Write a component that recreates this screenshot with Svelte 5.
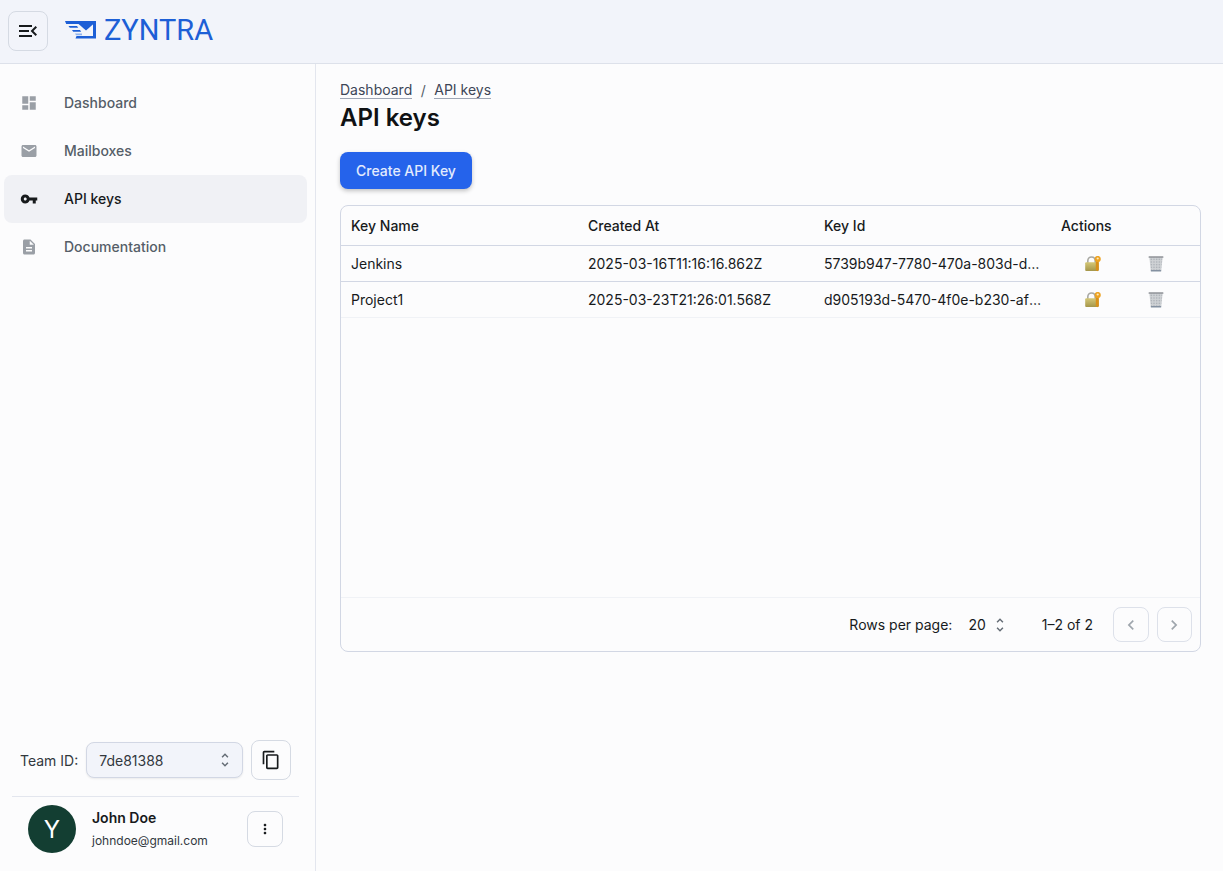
<script lang="ts">
	const navItems = [
		{ label: 'Dashboard', icon: 'M3 13h8V3H3v10zm0 8h8v-6H3v6zm10 0h8V11h-8v10zm0-18v6h8V3h-8z' },
		{
			label: 'Mailboxes',
			icon: 'M20 4H4c-1.1 0-1.99.9-1.99 2L2 18c0 1.1.9 2 2 2h16c1.1 0 2-.9 2-2V6c0-1.1-.9-2-2-2zm0 4l-8 5-8-5V6l8 5 8-5v2z'
		},
		{
			label: 'API keys',
			icon: 'M12.65 10C11.83 7.67 9.61 6 7 6c-3.31 0-6 2.69-6 6s2.69 6 6 6c2.61 0 4.83-1.67 5.65-4H17v4h4v-4h2v-4H12.65zM7 14c-1.1 0-2-.9-2-2s.9-2 2-2 2 .9 2 2-.9 2-2 2z',
			active: true
		},
		{
			label: 'Documentation',
			icon: 'M14 2H6c-1.1 0-1.99.9-1.99 2L4 20c0 1.1.89 2 1.99 2H18c1.1 0 2-.9 2-2V8l-6-6zm2 16H8v-2h8v2zm0-4H8v-2h8v2zm-3-5V3.5L18.5 9H13z'
		}
	];

	const apiKeys = [
		{ name: 'Jenkins', created: '2025-03-16T11:16:16.862Z', id: '5739b947-7780-470a-803d-d2c41f07a9be' },
		{ name: 'Project1', created: '2025-03-23T21:26:01.568Z', id: 'd905193d-5470-4f0e-b230-af71c6e2d810' }
	];

	const unfold =
		'M12 5.83 15.17 9l1.41-1.41L12 3 7.41 7.59 8.83 9 12 5.83zm0 12.34L8.83 15l-1.41 1.41L12 21l4.59-4.59L15.17 15 12 18.17z';
</script>

<div class="page">
	<header class="topbar">
		<button class="icon-btn menu-btn" aria-label="Toggle menu">
			<svg viewBox="0 0 24 24" width="24" height="24"
				><path
					d="M3 18h13v-2H3v2zm0-5h10v-2H3v2zm0-7v2h13V6H3zm18 9.59L17.42 12 21 8.41 19.59 7l-5 5 5 5L21 15.59z"
				/></svg
			>
		</button>
		<div class="brand">
			<svg class="logo" viewBox="0 0 31 18" width="31" height="18">
				<path d="M0 0H31V17.5H10.5L11.5 15H28V3H1.2Z" fill="#1d5fd6" />
				<path d="M13 2.5H29L21 9.5Z" fill="#1d5fd6" />
				<path d="M3.5 5H12L13.2 6.8H4.8Z" fill="#1d5fd6" />
				<path d="M7 9H15L16.2 10.8H8.2Z" fill="#1d5fd6" />
				<path d="M10 12.6H17V14.2H11Z" fill="#8fb2ec" />
			</svg>
			<span class="brand-name">ZYNTRA</span>
		</div>
	</header>

	<div class="body">
		<aside class="sidebar">
			<nav class="nav">
				{#each navItems as item}
					<a href="#top" class="nav-item" class:active={item.active}>
						<svg viewBox="0 0 24 24" width="18" height="18"><path d={item.icon} /></svg>
						<span>{item.label}</span>
					</a>
				{/each}
			</nav>

			<div class="team-row">
				<span class="team-label">Team ID:</span>
				<div class="team-select">
					<span>7de81388</span>
					<svg viewBox="0 0 24 24" width="18" height="18"><path d={unfold} /></svg>
				</div>
				<button class="icon-btn copy-btn" aria-label="Copy team id">
					<svg viewBox="0 0 24 24" width="20" height="20"
						><path
							d="M16 1H4c-1.1 0-2 .9-2 2v14h2V3h12V1zm3 4H8c-1.1 0-2 .9-2 2v14c0 1.1.9 2 2 2h11c1.1 0 2-.9 2-2V7c0-1.1-.9-2-2-2zm0 16H8V7h11v14z"
						/></svg
					>
				</button>
			</div>

			<div class="user-row">
				<div class="avatar">Y</div>
				<div class="user-info">
					<div class="user-name">John Doe</div>
					<div class="user-mail">johndoe@gmail.com</div>
				</div>
				<button class="icon-btn more-btn" aria-label="More">
					<svg viewBox="0 0 24 24" width="16" height="16"
						><path
							d="M12 8c1.1 0 2-.9 2-2s-.9-2-2-2-2 .9-2 2 .9 2 2 2zm0 2c-1.1 0-2 .9-2 2s.9 2 2 2 2-.9 2-2-.9-2-2-2zm0 6c-1.1 0-2 .9-2 2s.9 2 2 2 2-.9 2-2-.9-2-2-2z"
						/></svg
					>
				</button>
			</div>
		</aside>

		<main class="content">
			<div class="crumbs">
				<a href="#top">Dashboard</a>
				<span class="sep">/</span>
				<a href="#top">API keys</a>
			</div>
			<h1>API keys</h1>
			<button class="create-btn">Create API Key</button>

			<div class="table-card">
				<table>
					<thead>
						<tr>
							<th>Key Name</th>
							<th>Created At</th>
							<th>Key Id</th>
							<th>Actions</th>
						</tr>
					</thead>
					<tbody>
						{#each apiKeys as key}
							<tr>
								<td>{key.name}</td>
								<td>{key.created}</td>
								<td class="key-id"><div class="ellipsis">{key.id}</div></td>
								<td class="actions">
									<div class="action-icons">
										<svg viewBox="0 0 16 16" width="16" height="16" aria-label="Rotate key">
											<defs>
												<linearGradient id="lockBody" x1="0" y1="0" x2="0" y2="1">
													<stop offset="0" stop-color="#d5c878" />
													<stop offset="1" stop-color="#a5964a" />
												</linearGradient>
											</defs>
											<path
												d="M2.8 7V5C2.8 2.6 4.4 1 6.5 1S10.2 2.6 10.2 5V7"
												fill="none"
												stroke="#a8a8a2"
												stroke-width="1.6"
											/>
											<rect x="0.2" y="6.2" width="13.6" height="8.8" rx="1" fill="url(#lockBody)" />
											<path d="M10.8 4H13.8V14L12.3 15.2 10.8 14Z" fill="#d9901a" />
											<circle cx="12.7" cy="3" r="3.1" fill="#eda322" />
											<circle cx="12.7" cy="2.5" r="1.1" fill="#fde9c0" />
										</svg>
										<svg viewBox="0 0 16 16" width="16" height="16" aria-label="Delete key">
											<defs>
												<pattern id="mesh" width="1.6" height="1.6" patternUnits="userSpaceOnUse">
													<rect width="1.6" height="1.6" fill="#d0d3d6" />
													<rect width="0.8" height="0.8" fill="#a6abb2" />
												</pattern>
											</defs>
											<path d="M1.4 1.4H14.6L13.2 15H2.8Z" fill="url(#mesh)" />
											<rect x="0.6" y="0.4" width="14.8" height="1.2" rx="0.4" fill="#5a5f67" />
											<rect x="2.8" y="14" width="10.4" height="1.6" rx="0.6" fill="#8491a1" />
										</svg>
									</div>
								</td>
							</tr>
						{/each}
					</tbody>
				</table>

				<div class="pager">
					<span>Rows per page:</span>
					<div class="page-size">
						<span>20</span>
						<svg viewBox="0 0 24 24" width="18" height="18"><path d={unfold} /></svg>
					</div>
					<span class="range">1–2 of 2</span>
					<div class="pager-btns">
						<button class="icon-btn pager-btn" aria-label="Previous page" disabled>
							<svg viewBox="0 0 24 24" width="20" height="20"
								><path d="M15.41 7.41 14 6l-6 6 6 6 1.41-1.41L10.83 12z" /></svg
							>
						</button>
						<button class="icon-btn pager-btn" aria-label="Next page" disabled>
							<svg viewBox="0 0 24 24" width="20" height="20"
								><path d="M10 6 8.59 7.41 13.17 12l-4.58 4.59L10 18l6-6z" /></svg
							>
						</button>
					</div>
				</div>
			</div>
		</main>
	</div>
</div>

<style>
	:global(body) {
		margin: 0;
		background: #fcfcfd;
		color: #171a1c;
		font-family: Inter, 'Liberation Sans', sans-serif;
		font-size: 14px;
	}

	.page {
		height: 871px;
		display: flex;
		flex-direction: column;
		overflow: hidden;
	}

	/* Top bar */
	.topbar {
		height: 64px;
		box-sizing: border-box;
		flex-shrink: 0;
		display: flex;
		align-items: center;
		gap: 17px;
		padding: 0 8px 2px;
		background: #f2f4fa;
		border-bottom: 1px solid #dde1ea;
	}

	.icon-btn {
		display: flex;
		align-items: center;
		justify-content: center;
		padding: 0;
		background: transparent;
		border: 1px solid #d2d7e4;
		border-radius: 6px;
		box-sizing: border-box;
	}

	.icon-btn svg {
		fill: #171a1c;
	}

	.menu-btn {
		width: 40px;
		height: 40px;
		border-radius: 8px;
		border-color: #d5dae3;
	}

	.brand {
		display: flex;
		align-items: center;
		gap: 8px;
	}

	.logo {
		margin-top: -2px;
	}

	.brand-name {
		font-family: Roboto, Inter, sans-serif;
		font-size: 29px;
		line-height: 36px;
		margin-top: -1px;
		color: #1d5fd6;
	}

	.body {
		flex: 1;
		display: flex;
		min-height: 0;
	}

	/* Sidebar */
	.sidebar {
		width: 316px;
		box-sizing: border-box;
		flex-shrink: 0;
		display: flex;
		flex-direction: column;
		padding: 15px 8px 0 4px;
		border-right: 1px solid #e3e6ee;
	}

	.nav {
		flex: 1;
		display: flex;
		flex-direction: column;
	}

	.nav-item {
		height: 48px;
		display: flex;
		align-items: center;
		gap: 26px;
		padding-left: 16px;
		padding-bottom: 1px;
		box-sizing: border-box;
		border-radius: 8px;
		color: #555e68;
		font-weight: 500;
		text-decoration: none;
	}

	.nav-item svg {
		fill: #9a9fa6;
		flex-shrink: 0;
	}

	.nav-item.active {
		background: #f0f1f5;
		color: #171a1c;
	}

	.nav-item.active svg {
		fill: #171a1c;
	}

	.team-row {
		display: flex;
		align-items: center;
		gap: 8px;
		padding: 0 0 16px 16px;
	}

	.team-label {
		color: #32383e;
	}

	.team-select {
		width: 157px;
		height: 36px;
		box-sizing: border-box;
		display: flex;
		align-items: center;
		justify-content: space-between;
		padding: 0 8px 0 12px;
		background: #f2f4fa;
		border: 1px solid #d2d7e4;
		border-radius: 8px;
		box-shadow: 0 1px 2px rgba(21, 21, 21, 0.08);
		color: #32383e;
	}

	.team-select svg {
		fill: #636b74;
	}

	.copy-btn {
		width: 40px;
		height: 40px;
		border-radius: 8px;
		border-color: #d5dae3;
	}

	.user-row {
		display: flex;
		align-items: flex-start;
		height: 75px;
		box-sizing: border-box;
		margin: 0 8px;
		padding: 8px 16px 0 16px;
		border-top: 1px solid #e3e6ee;
	}

	.avatar {
		width: 48px;
		height: 48px;
		flex-shrink: 0;
		display: flex;
		align-items: center;
		justify-content: center;
		border-radius: 50%;
		background: #133e32;
		color: #fff;
		font-size: 24px;
	}

	.user-info {
		flex: 1;
		margin: 3px 0 0 16px;
	}

	.user-name {
		font-weight: 600;
		line-height: 20px;
	}

	.user-mail {
		font-size: 12px;
		line-height: 20px;
		margin-top: 3px;
		color: #32383e;
	}

	.more-btn {
		width: 36px;
		height: 36px;
		margin-top: 6px;
		border-color: #d5dae3;
		border-radius: 8px;
	}

	/* Main column */
	.content {
		flex: 1;
		min-width: 0;
		box-sizing: border-box;
		padding: 17px 22px 0 24px;
	}

	.crumbs {
		display: flex;
		gap: 8.5px;
		line-height: 20px;
		color: #32383e;
	}

	.crumbs a {
		color: #3d4657;
		text-decoration: none;
		border-bottom: 1px solid #9ea6b5;
		line-height: 17px;
		height: 17px;
	}

	.sep {
		color: #555e68;
	}

	h1 {
		margin: 1px 0 0;
		font-size: 24px;
		line-height: 32px;
		font-weight: 600;
		color: #101214;
	}

	.create-btn {
		display: block;
		margin-top: 18px;
		width: 132px;
		height: 37px;
		background: #2563eb;
		border: 0;
		border-radius: 8px;
		color: #e3ebfd;
		font: 500 14px Inter, sans-serif;
		box-shadow: 0 2px 4px rgba(21, 21, 21, 0.25);
	}

	/* Table */
	.table-card {
		margin-top: 16px;
		height: 447px;
		box-sizing: border-box;
		display: flex;
		flex-direction: column;
		border: 1px solid #d2d7e4;
		border-radius: 8px;
	}

	table {
		flex: 1;
		display: block;
		width: 100%;
		border-collapse: collapse;
	}

	thead,
	tbody {
		display: block;
	}

	tr {
		display: grid;
		grid-template-columns: 237px 236px 237px 1fr;
	}

	th,
	td {
		display: flex;
		align-items: center;
		padding: 0 10px;
		text-align: left;
		min-width: 0;
	}

	th {
		font-weight: 500;
		height: 39px;
	}

	thead tr {
		border-bottom: 1px solid #d2d7e4;
	}

	td {
		height: 35px;
	}

	td.key-id {
		padding-right: 8px;
	}

	tbody tr {
		border-bottom: 1px solid #d2d7e4;
	}

	tbody tr:last-child {
		border-bottom-color: #f0f2f6;
	}

	.ellipsis {
		overflow: hidden;
		white-space: nowrap;
		text-overflow: ellipsis;
	}

	td.actions {
		padding: 0 2px 0 0;
		justify-content: center;
	}

	.action-icons {
		display: flex;
		gap: 47px;
	}

	.pager {
		height: 53px;
		flex-shrink: 0;
		display: flex;
		align-items: center;
		justify-content: flex-end;
		padding-right: 8px;
		border-top: 1px solid #f0f2f6;
		color: #171a1c;
	}

	.page-size {
		display: flex;
		align-items: center;
		gap: 5px;
		margin-left: 16px;
	}

	.page-size svg {
		fill: #636b74;
	}

	.range {
		margin-left: 33px;
	}

	.pager-btns {
		display: flex;
		gap: 8px;
		margin-left: 20px;
	}

	.pager-btn {
		width: 35.5px;
		height: 35.5px;
		border-color: #dde1ea;
		border-radius: 8px;
	}

	.pager-btn svg {
		fill: #9fa6ad;
	}
</style>
